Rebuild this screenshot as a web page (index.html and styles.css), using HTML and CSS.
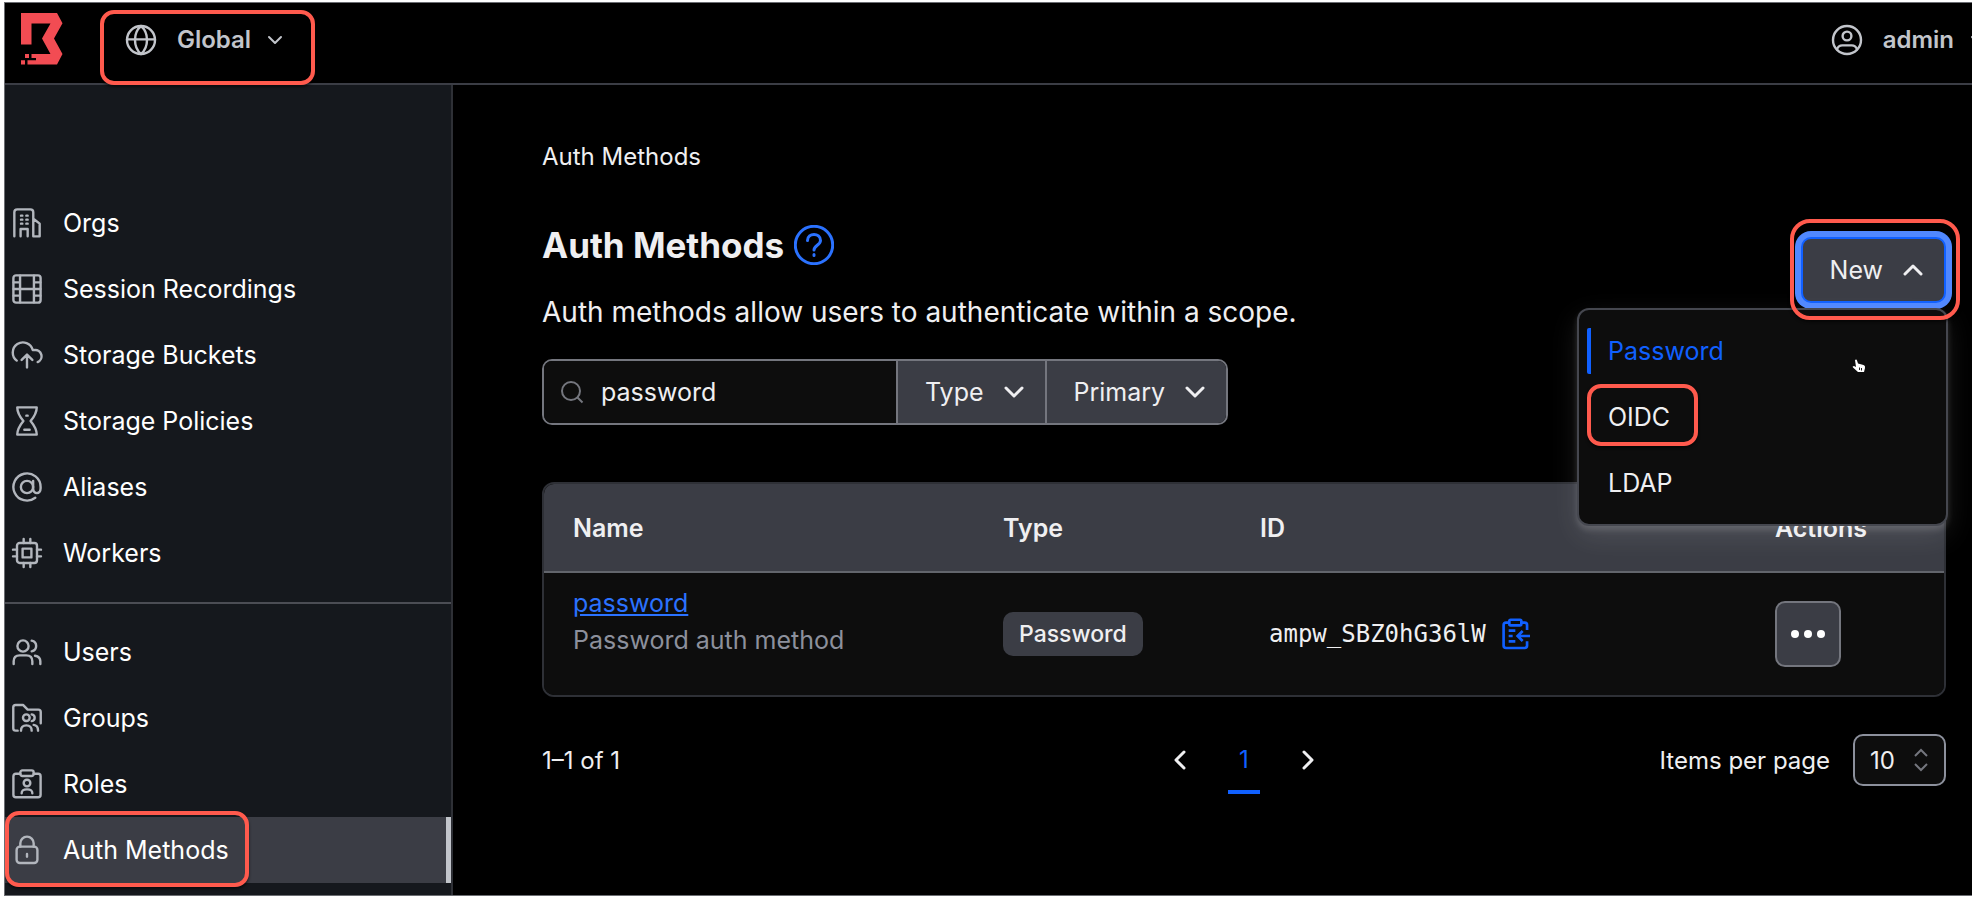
FILE: index.html
```
<!DOCTYPE html>
<html lang="en">
<head>
    <meta charset="UTF-8">
    <meta name="viewport" content="width=device-width, initial-scale=1.0">
    <title>Auth Methods - Boundary</title>
    <link rel="stylesheet" href="styles.css">
</head>
<body>
<div class="app">

    <!-- Top Bar -->
    <header class="topbar">
        <a href="#home" class="logo" aria-label="Boundary">
            <svg viewBox="0 0 42 52"><path d="M0 0H36L41.500 10.200 33 25.500 41.500 41 36 51.500H6.500V47.300H15V45H10.500V41H29.500L21 25.500 29.500 10.500H10.500V31.500H0ZM4 41H8V45H4ZM0 47.300H4V51.500H0Z"/></svg>
        </a>
        <button type="button" class="scope-button highlight">
            <svg class="icon" viewBox="0 0 24 24"><circle cx="12" cy="12" r="10.500"/><path d="M1.500 11.500H22.500M12 1.500C8.800 4.200 7.500 8 7.500 12S8.800 19.800 12 22.500C15.200 19.800 16.500 16 16.500 12S15.200 4.200 12 1.500Z"/></svg>
            <span>Global</span>
            <svg class="chevron-small" viewBox="0 0 16 16"><path d="M2 5 8 11 14 5"/></svg>
        </button>
        <button type="button" class="user-button">
            <svg class="icon" viewBox="0 0 24 24"><circle cx="12" cy="12" r="10.500"/><circle cx="12" cy="9" r="3.300"/><path d="M4.500 19C5.200 16.800 6.500 16 8.500 16H15.500C17.500 16 18.800 16.800 19.500 19"/></svg>
            <span>admin</span>
            <svg class="chevron-small" viewBox="0 0 16 16"><path d="M2 5 8 11 14 5"/></svg>
        </button>
    </header>

    <div class="layout">
        <!-- Sidebar -->
        <nav class="sidebar">
            <ul>
                <li><a href="#orgs">
                    <svg class="icon" viewBox="0 0 24 24"><path d="M2.500 22V4C2.500 2.500 3.200 1.800 4.700 1.800H14.500C16 1.800 16.700 2.500 16.700 4V22H21.500V12.500L17 9M7.200 22V16.500H12.500V22"/><path d="M7.500 6.500H8.500M11.500 6.500H12.500M7.500 9.500H8.500M11.500 9.500H12.500M7.500 12.500H8.500M11.500 12.500H12.500"/></svg>
                    Orgs</a></li>
                <li><a href="#session-recordings">
                    <svg class="icon" viewBox="0 0 24 24"><rect x="1.800" y="1.800" width="20.400" height="20.400" rx="2"/><path d="M6.800 2V22M17.200 2V22M2 12H22M2 7H6.800M2 17H6.800M17.200 7H22M17.200 17H22"/></svg>
                    Session Recordings</a></li>
                <li><a href="#storage-buckets">
                    <svg class="icon" viewBox="0 0 24 24"><path d="M4.300 16.200A7.600 7.600 0 1 1 16.300 8.300H17.600A4.700 4.700 0 0 1 20 17.300M12 21.300V12M8 15.700 12 11.700 16 15.700"/></svg>
                    Storage Buckets</a></li>
                <li><a href="#storage-policies">
                    <svg class="icon" viewBox="0 0 24 24"><path d="M4.700 1.800H19.300C19.300 5.500 18 8 14.700 12 18 16 19.300 18.500 19.300 22.200H4.700C4.700 18.500 6 16 9.300 12 6 8 4.700 5.500 4.700 1.800ZM10 18.600H14M11.500 8H12.500"/></svg>
                    Storage Policies</a></li>
                <li><a href="#aliases">
                    <svg class="icon" viewBox="0 0 24 24"><circle cx="12" cy="12" r="4.600"/><path d="M16.600 7.400V13C16.600 17.800 22.200 17.800 22.200 13V12A10.200 10.200 0 1 0 18.200 20.100"/></svg>
                    Aliases</a></li>
                <li><a href="#workers">
                    <svg class="icon" viewBox="0 0 24 24"><rect x="4.500" y="4.500" width="15" height="15" rx="2"/><rect x="8.700" y="8.700" width="6.600" height="6.600"/><path d="M9.500 1.500V4.500M14.500 1.500V4.500M9.500 19.500V22.500M14.500 19.500V22.500M1.500 9.500H4.500M1.500 14.500H4.500M19.500 9.500H22.500M19.500 14.500H22.500"/></svg>
                    Workers</a></li>
            </ul>
            <ul>
                <li><a href="#users">
                    <svg class="icon" viewBox="0 0 24 24"><circle cx="9" cy="7.500" r="4.200"/><path d="M2 21V19C2 16 3.800 14.500 6.500 14.500H11.500C14.200 14.500 16 16 16 19V21M15.500 3.500C20 4.500 20 10.500 15.500 11.500M18 14.800C20.500 15.200 22 16.700 22 19V21"/></svg>
                    Users</a></li>
                <li><a href="#groups">
                    <svg class="icon" viewBox="0 0 24 24"><path d="M5 21.500H3.500C2.300 21.500 1.700 20.900 1.700 19.700V4C1.700 2.800 2.300 2.200 3.500 2.200H9L12.500 5.700H20.500C21.700 5.700 22.300 6.300 22.300 7.500V16"/><circle cx="11.500" cy="11.800" r="2.500"/><path d="M7.500 21.500C7.500 18.500 8.700 17.500 11.500 17.500S15.500 18.500 15.500 21.500M15.500 9.300C18.500 9.800 18.500 13.800 15.500 14.300M17 17.200C19.500 17.500 20.300 19 20.300 21.500"/></svg>
                    Groups</a></li>
                <li><a href="#roles">
                    <svg class="icon" viewBox="0 0 24 24"><path d="M7 4.300H3.700C2.500 4.300 1.800 5 1.800 6.200V20C1.800 21.200 2.500 21.900 3.700 21.900H20.300C21.500 21.900 22.200 21.200 22.200 20V6.200C22.200 5 21.500 4.300 20.300 4.300H17"/><rect x="7" y="1.800" width="10" height="4.200" rx="1.500"/><circle cx="12" cy="11.300" r="2.500"/><path d="M8 19C8 16.800 9 16 12 16S16 16.800 16 19"/></svg>
                    Roles</a></li>
                <li class="active highlight"><a href="#auth-methods">
                    <svg class="icon" viewBox="0 0 24 24"><rect x="4.200" y="9.500" width="15.600" height="12.300" rx="2.500"/><path d="M7 9.500V7A5 5 0 0 1 17 7V9.500M12 15V17"/></svg>
                    Auth Methods</a></li>
            </ul>
        </nav>

        <!-- Main Content -->
        <main>
            <div class="breadcrumb">Auth Methods</div>

            <div class="page-header">
                <div>
                    <h1>Auth Methods
                        <a href="#help" aria-label="Help">
                            <svg viewBox="0 0 40 40"><circle cx="20" cy="20" r="18.700"/><path d="M13.500 15.500C13.500 7.500 26.500 7.500 26.500 15.500 26.500 20 20 20.500 20 25M20 29.500V30.500"/></svg>
                        </a>
                    </h1>
                    <p>Auth methods allow users to authenticate within a scope.</p>
                </div>
                <div class="new-dropdown highlight">
                    <button type="button" class="new-button" aria-expanded="true">
                        New
                        <svg class="chevron" viewBox="0 0 20 20"><path d="M2 14 10 6 18 14"/></svg>
                    </button>
                    <ul class="menu">
                        <li class="current"><a href="#password">Password</a></li>
                        <li class="highlight"><a href="#oidc">OIDC</a></li>
                        <li><a href="#ldap">LDAP</a></li>
                    </ul>
                    <svg class="pointer" viewBox="0 0 14 14"><path d="M3 1Q4.500 0 5 1.500L6 4.500 11.500 6Q13.500 6.500 13 9L12 13H6L1 8.500Q0 7 2 7L4 8Z" fill="#fff"/><path d="M7.500 8.500V11M9.500 9V11.500" stroke="#222" stroke-width="1"/></svg>
                </div>
            </div>

            <!-- Search and Filters -->
            <div class="filters">
                <label class="search">
                    <svg viewBox="0 0 24 24"><circle cx="11" cy="11" r="9"/><path d="M17.500 17.500 22.500 22.500"/></svg>
                    <input type="text" value="password" aria-label="Search">
                </label>
                <button type="button">Type <svg class="chevron" viewBox="0 0 20 20"><path d="M2 6 10 14 18 6"/></svg></button>
                <button type="button">Primary <svg class="chevron" viewBox="0 0 20 20"><path d="M2 6 10 14 18 6"/></svg></button>
            </div>

            <!-- Auth Methods Table -->
            <div class="table-wrap">
                <table>
                    <thead>
                        <tr>
                            <th>Name</th>
                            <th class="col-type">Type</th>
                            <th class="col-id">ID</th>
                            <th class="col-actions">Actions</th>
                        </tr>
                    </thead>
                    <tbody>
                        <tr>
                            <td class="name">
                                <a href="#ampw">password</a>
                                <p>Password auth method</p>
                            </td>
                            <td><span class="badge">Password</span></td>
                            <td>
                                <button type="button" class="copy">
                                    ampw_SBZ0hG36lW
                                    <svg viewBox="0 0 24 24"><path d="M7 3.500H4.500C3.300 3.500 2.700 4.100 2.700 5.300V20.700C2.700 21.900 3.300 22.500 4.500 22.500H18.500C19.700 22.500 20.300 21.900 20.300 20.700V17.500M16 3.500H18.500C19.700 3.500 20.300 4.100 20.300 5.300V9"/><rect x="7" y="1.300" width="9" height="4.200" rx="1"/><path d="M6.500 9.500H11.500M6.500 13.500H9.500M6.500 17.500H11.500M22.500 13.500H13.500M17 9.700 13.200 13.500 17 17.300"/></svg>
                                </button>
                            </td>
                            <td>
                                <button type="button" class="more" aria-label="Manage">
                                    <svg viewBox="0 0 34 8"><circle cx="4" cy="4" r="4"/><circle cx="17" cy="4" r="4"/><circle cx="30" cy="4" r="4"/></svg>
                                </button>
                            </td>
                        </tr>
                    </tbody>
                </table>
            </div>

            <!-- Pagination -->
            <div class="pagination">
                <span>1–1 of 1</span>
                <div class="pages">
                    <button type="button" aria-label="Previous page"><svg class="chevron" viewBox="0 0 20 20"><path d="M14 2 6 10 14 18"/></svg></button>
                    <a href="#page-1" class="page">1</a>
                    <button type="button" aria-label="Next page"><svg class="chevron" viewBox="0 0 20 20"><path d="M6 2 14 10 6 18"/></svg></button>
                </div>
                <div class="page-size">
                    <label for="page-size">Items per page</label>
                    <div class="select-wrap">
                        <select id="page-size">
                            <option>10</option>
                            <option>30</option>
                            <option>50</option>
                        </select>
                        <svg viewBox="0 0 16 24"><path d="M2 8 8 2 14 8M2 16 8 22 14 16"/></svg>
                    </div>
                </div>
            </div>
        </main>
    </div>
</div>
</body>
</html>
```
FILE: styles.css
```
/* General Reset */
*, *::after {
    margin: 0;
    padding: 0;
    box-sizing: border-box;
}

body {
    background: #fff;
    padding: 2px 0 4px 4px;
    color: #efeff1;
    font-family: Inter, sans-serif;
    font-size: 25px;
}

a {
    color: inherit;
    text-decoration: none;
}

ul {
    list-style: none;
}

button, input, select {
    font: inherit;
    color: inherit;
    background: none;
    border: none;
}

button {
    cursor: pointer;
}

svg {
    display: block;
    flex-shrink: 0;
    fill: none;
    stroke: currentColor;
    stroke-width: 2;
}

.icon {
    width: 32px;
    height: 32px;
    stroke-width: 1.8;
    stroke-linecap: round;
    stroke-linejoin: round;
}

.chevron {
    width: 20px;
    height: 20px;
    stroke-width: 3;
    stroke-linecap: round;
    stroke-linejoin: round;
}

.chevron-small {
    width: 16px;
    height: 16px;
    stroke-linecap: round;
    stroke-linejoin: round;
}

/* Red callout boxes */
.highlight {
    position: relative;
}

.highlight::after {
    content: "";
    position: absolute;
    z-index: 5;
    border: 4px solid #ff5a4d;
    border-radius: 14px;
    box-shadow: 0 2px 3px rgba(0, 0, 0, 0.6);
    pointer-events: none;
}

/* App Frame */
.app {
    display: flex;
    flex-direction: column;
    min-height: calc(100vh - 6px);
    background: #000;
    border: 1px solid #6b6d72;
    border-right: none;
    overflow: hidden;
}

/* Top Bar */
.topbar {
    display: flex;
    align-items: flex-start;
    height: 82px;
    padding: 10px 0 0 16px;
    border-bottom: 2px solid #3b3d45;
    color: #c2c5cb;
    font-size: 24px;
    font-weight: 600;
}

.logo svg {
    width: 42px;
    height: 52px;
    fill: #f24c53;
    stroke: none;
}

.scope-button, .user-button {
    display: flex;
    align-items: center;
    height: 53px;
    gap: 20px;
}

.scope-button {
    margin-left: 62px;
}

.scope-button .chevron-small, .user-button .chevron-small {
    margin-left: -4px;
}

.user-button {
    margin-left: auto;
    margin-right: -14px;
}

.scope-button::after {
    inset: -3px -32px -19px -25px;
}

/* Sidebar */
.layout {
    display: flex;
    flex: 1;
}

.sidebar {
    flex: 0 0 448px;
    background: #15181d;
    border-right: 2px solid #2e3036;
    padding-top: 105px;
    color: #fff;
}

.sidebar ul + ul {
    margin-top: 16px;
    padding-top: 15px;
    border-top: 2px solid #4b4d54;
}

.sidebar a {
    display: flex;
    align-items: center;
    gap: 20px;
    height: 66px;
    padding-left: 6px;
}

.sidebar .icon {
    color: #b2b6bd;
}

.sidebar .active {
    background: #3b3d45;
    border-right: 5px solid #c2c5cb;
}

.sidebar .active::after {
    inset: -6px auto -4px 0;
    width: 244px;
}

/* Main Content */
main {
    flex: 1;
    min-width: 0;
    padding: 56px 26px 0 89px;
}

.breadcrumb {
    font-size: 24px;
    line-height: 32px;
}

.page-header {
    display: flex;
    justify-content: space-between;
    align-items: flex-start;
    margin-top: 52px;
}

h1 {
    display: flex;
    align-items: center;
    gap: 10px;
    font-size: 35px;
    font-weight: 700;
    line-height: 40px;
}

h1 svg {
    width: 40px;
    height: 40px;
    color: #2b72ff;
    stroke-width: 3;
    stroke-linecap: round;
}

.page-header p {
    margin-top: 29px;
    font-size: 28px;
    line-height: 36px;
}

/* New Dropdown */
.new-dropdown {
    margin-top: 12px;
}

.new-dropdown::after {
    inset: -18px -14px -17px -11px;
    border-radius: 20px;
}

.new-button {
    display: flex;
    align-items: center;
    gap: 20px;
    height: 66px;
    padding: 0 21px 0 27px;
    background: #3b3d45;
    border: 2px solid #1060ff;
    border-radius: 10px;
    box-shadow: 0 0 0 6px #5088ff;
}

.menu {
    position: absolute;
    z-index: 2;
    top: 71px;
    right: -2px;
    width: 371px;
    padding: 8px;
    background: #0d0d0d;
    border: 2px solid #45474f;
    border-radius: 12px;
    box-shadow: 0 4px 6px rgba(255, 255, 255, 0.15), 0 10px 28px rgba(255, 255, 255, 0.1);
}

.menu a {
    display: flex;
    align-items: center;
    height: 66px;
    padding-left: 21px;
}

.menu .current a {
    height: 46px;
    margin: 10px 0;
    padding-left: 17px;
    color: #1060ff;
    border-left: 4px solid #1060ff;
    border-radius: 2px;
}

.menu .highlight::after {
    inset: 0 auto 4px 0;
    width: 111px;
}

.pointer {
    position: absolute;
    z-index: 3;
    top: 122px;
    right: 80px;
    width: 14px;
    height: 14px;
    stroke: none;
}

/* Search and Filters */
.filters {
    display: inline-flex;
    height: 66px;
    margin-top: 29px;
    border: 2px solid #74767e;
    border-radius: 10px;
    overflow: hidden;
}

.search {
    display: flex;
    align-items: center;
    gap: 17px;
    width: 352px;
    padding-left: 16px;
    background: #0d0d0d;
}

.search svg {
    width: 24px;
    height: 24px;
    color: #74767e;
}

.search input {
    width: 260px;
    outline: none;
}

.filters button {
    display: flex;
    align-items: center;
    gap: 20px;
    padding: 0 21px 0 27px;
    background: #3b3d45;
    border-left: 2px solid #74767e;
}

/* Table */
.table-wrap {
    margin-top: 57px;
    border: 2px solid #2e3036;
    border-radius: 12px;
    overflow: hidden;
}

table {
    width: 100%;
    table-layout: fixed;
    border-collapse: collapse;
    background: #0d0d0d;
}

th {
    height: 88px;
    padding-left: 29px;
    background: #3b3d45;
    border-bottom: 2px solid #62656c;
    text-align: left;
    font-weight: 600;
}

.col-type {
    width: 257px;
}

.col-id {
    width: 515px;
}

.col-actions {
    width: 198px;
}

td {
    height: 123px;
    padding-left: 29px;
    vertical-align: middle;
}

td.name {
    padding-top: 12px;
    vertical-align: top;
    line-height: 37px;
}

.name a {
    color: #2b72ff;
    text-decoration: underline;
}

.name p {
    color: #8c909c;
}

.badge {
    display: inline-block;
    padding: 0 16px;
    background: #3b3d45;
    border-radius: 10px;
    font-size: 23px;
    font-weight: 500;
    line-height: 44px;
}

.copy {
    display: flex;
    align-items: center;
    gap: 14px;
    padding-left: 9px;
    font-family: "DejaVu Sans Mono", monospace;
    font-size: 24px;
}

.copy svg {
    width: 32px;
    height: 32px;
    color: #1060ff;
}

.more {
    display: flex;
    align-items: center;
    justify-content: center;
    width: 66px;
    height: 66px;
    background: #3b3d45;
    border: 2px solid #74767e;
    border-radius: 10px;
}

.more svg {
    width: 34px;
    height: 8px;
    fill: #fff;
    stroke: none;
}

/* Pagination */
.pagination {
    display: grid;
    grid-template-columns: 1fr auto 1fr;
    align-items: center;
    margin-top: 29px;
    font-size: 24px;
}

.pages {
    display: flex;
    align-items: center;
    gap: 38px;
}

.page {
    width: 32px;
    padding: 19px 0 16px;
    color: #1060ff;
    border-bottom: 4px solid #1060ff;
    text-align: center;
}

.page-size {
    display: flex;
    align-items: center;
    justify-content: flex-end;
    gap: 23px;
}

.select-wrap {
    position: relative;
}

.select-wrap select {
    appearance: none;
    width: 93px;
    height: 52px;
    padding-left: 15px;
    background: #0d0d0d;
    border: 2px solid #8c909c;
    border-radius: 10px;
}

.select-wrap svg {
    position: absolute;
    top: 14px;
    right: 17px;
    width: 16px;
    height: 24px;
    color: #74767e;
    pointer-events: none;
}
```
